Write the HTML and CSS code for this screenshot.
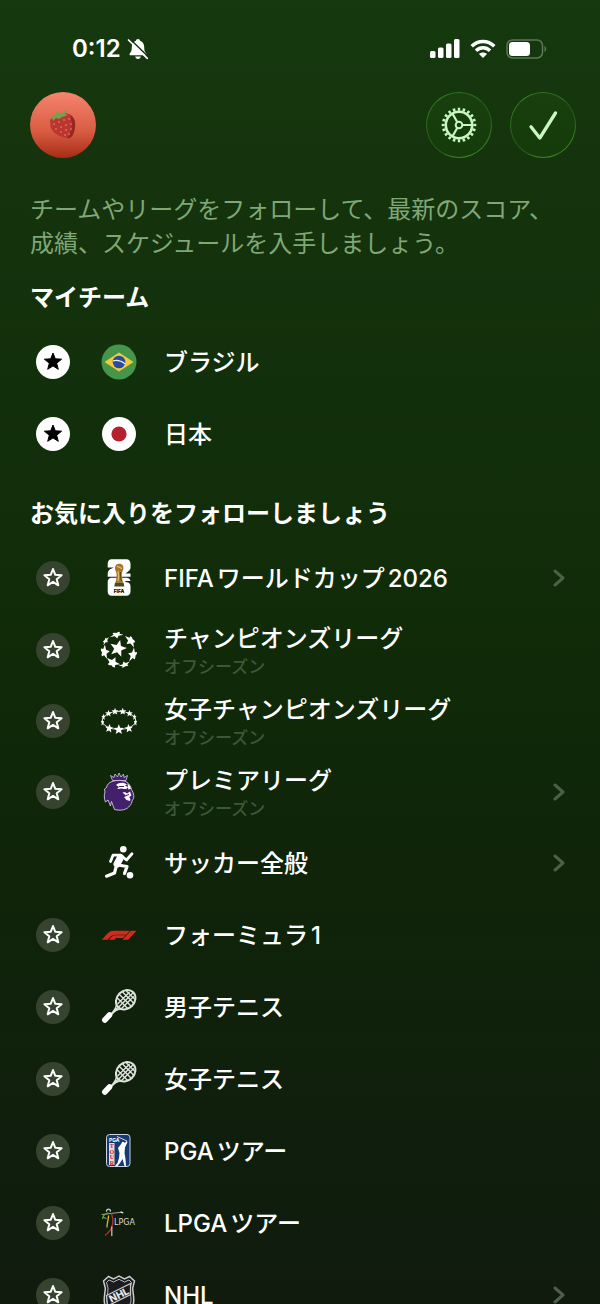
FILE: index.html
```html
<!DOCTYPE html>
<html lang="ja">
<head>
<meta charset="utf-8">
<meta name="viewport" content="width=device-width, initial-scale=1">
<title>マイスポーツ</title>
<link rel="stylesheet" href="styles.css">
</head>
<body>
<svg class="defs" aria-hidden="true">
  <defs>
    <path id="star" d="M0-9 2.300-3.200 8.600-2.800 3.700 1.200 5.300 7.300 0 3.900-5.300 7.300-3.700 1.200-8.600-2.800-2.300-3.200Z"/>
    <g id="racket">
      <path d="M19 20.500 12.500 26.500M17.500 17.500C17 21 15 24 12 27M22.500 21.500C19 22 15.500 24 12.500 27.500" fill="none" stroke="#dfe3de" stroke-width="1.500"/>
      <g transform="rotate(-45 26.700 12.800)">
        <ellipse cx="26.700" cy="12.800" rx="10.600" ry="8.800" fill="none" stroke="#dfe3de" stroke-width="2"/>
        <path d="M18 10h17M17 13h20M18 16h17M22 5v16M26 4v18M30 4v18M33.500 7v12" stroke="#dfe3de" stroke-width="1.400"/>
      </g>
      <path d="M5.800 33 10.500 28" stroke="#fff" stroke-width="5.500" stroke-linecap="round"/>
    </g>
  </defs>
</svg>

<div class="status">
  <div class="status-left">
    <span class="time">0:12</span>
    <svg width="22" height="22" viewBox="0 0 22 22" aria-hidden="true">
      <path d="M11 1c1.200 0 1.900.8 2 1.800 3 1 4.200 3.500 4.200 6.200 0 4 .8 5 2 6.400.6.800.3 1.800-.8 1.800H3.600c-1.100 0-1.400-1-.8-1.800C4 14 4.800 13 4.800 9c0-2.700 1.200-5.200 4.200-6.200C9.100 1.800 9.800 1 11 1ZM8.200 18.500h5.600c-.3 1.500-1.300 2.500-2.800 2.500s-2.500-1-2.800-2.500Z" fill="#fff"/>
      <path d="M3 1 22 19.500" stroke="#14360f" stroke-width="1.600"/>
      <path d="M1.500 2 20.300 20.300" stroke="#fff" stroke-width="1.700" stroke-linecap="round"/>
    </svg>
  </div>
  <div class="status-right">
    <svg width="30" height="20" viewBox="0 0 30 20" aria-hidden="true" fill="#fff">
      <rect x="0" y="12" width="5.500" height="7" rx="1.500"/><rect x="8" y="8.500" width="5.500" height="10.500" rx="1.500"/><rect x="16" y="4.500" width="5.500" height="14.500" rx="1.500"/><rect x="24" y="0" width="5.500" height="19" rx="1.500"/>
    </svg>
    <svg width="26" height="20" viewBox="0 0 26 20" aria-hidden="true" fill="none" stroke="#fff" stroke-width="3.400">
      <path d="M1.700 7.300c6.500-6.500 16.100-6.500 22.600 0M6 11.700c4-4 10-4 14 0"/>
      <path d="M13 19 9 14.900c2.200-2 5.800-2 8 0Z" fill="#fff" stroke="none"/>
    </svg>
    <svg width="41" height="20" viewBox="0 0 41 20" aria-hidden="true">
      <rect x="1" y="1" width="35.500" height="18" rx="5.500" fill="none" stroke="#5c7658" stroke-width="1.500"/>
      <rect x="3" y="3" width="21" height="14" rx="3.500" fill="#fff"/>
      <path d="M38.500 7v6c2.300-1 2.300-5 0-6Z" fill="#5c7658"/>
    </svg>
  </div>
</div>

<header class="topbar">
  <button class="avatar" aria-label="プロフィール">
    <svg width="32" height="34" viewBox="0 0 32 34" aria-hidden="true">
      <path d="M3 12C7 7 18 3 24 7c5 4 5 11 3 17-1 4-4 7-7 6C12 29 5 24 3.500 19Z" fill="#bd3531"/>
      <path d="M23 7c6 3 6 11 4 17-1 4-4 7-7 6 5-5 6-14 3-23Z" fill="#962823"/>
      <path d="M2 12C5 9 8 6 10 6L8 2l5 4 7-4-2 4 3 1-6 2-3 2-3-1-3 3-1-3Z" fill="#71a34c"/>
      <g fill="#efac79"><circle cx="7" cy="16" r=".7"/><circle cx="12" cy="14" r=".7"/><circle cx="17" cy="12" r=".7"/><circle cx="22" cy="11" r=".7"/><circle cx="9" cy="21" r=".7"/><circle cx="14" cy="19" r=".7"/><circle cx="19" cy="17" r=".7"/><circle cx="24" cy="16" r=".7"/><circle cx="14" cy="24" r=".7"/><circle cx="19" cy="22" r=".7"/><circle cx="24" cy="21" r=".7"/><circle cx="18" cy="27" r=".7"/><circle cx="22" cy="26" r=".7"/></g>
    </svg>
  </button>
  <div class="actions">
    <button class="round" aria-label="設定">
      <svg width="40" height="40" viewBox="-20 -20 40 40" aria-hidden="true" fill="none" stroke="#c9f7c1">
        <circle r="13.200" stroke-width="2.600"/>
        <circle r="15.800" stroke-width="3" pathLength="60" stroke-dasharray="1.500 1.500" stroke-dashoffset=".75"/>
        <circle r="3.300" stroke-width="2"/>
        <path d="M3.500 0H13M-1.800-3-6.600-11.500M-1.800 3-6.600 11.500" stroke-width="2.200"/>
      </svg>
    </button>
    <button class="round" aria-label="完了">
      <svg width="40" height="40" viewBox="0 0 40 40" aria-hidden="true" fill="none" stroke="#c9f7c1" stroke-width="3.300" stroke-linecap="round" stroke-linejoin="round"><path d="M8 21.800 16.800 33 32.500 8"/></svg>
    </button>
  </div>
</header>

<main class="content">
  <p class="lead">チームやリーグをフォローして、最新のスコア、成績、スケジュールを入手しましょう。</p>

  <h2>マイチーム</h2>
  <ul class="list">
    <li class="row">
      <button class="star on" aria-label="ブラジルのフォローを解除"><svg width="24" height="24" viewBox="-12 -12 24 24"><use href="#star"/></svg></button>
      <svg class="logo" viewBox="0 0 40 40" aria-hidden="true">
        <circle cx="20" cy="20" r="17.500" fill="#45964a"/><path d="M5.500 20 20 10.500 34.500 20 20 29.500Z" fill="#f4c93e"/><circle cx="20" cy="20" r="6.300" fill="#2b4a9c"/><path d="M14 18.800c4-1 8.500 0 12 3" fill="none" stroke="#e8edf5" stroke-width="1.200"/>
      </svg>
      <div class="name">ブラジル</div>
    </li>
    <li class="row">
      <button class="star on" aria-label="日本のフォローを解除"><svg width="24" height="24" viewBox="-12 -12 24 24"><use href="#star"/></svg></button>
      <svg class="logo" viewBox="0 0 40 40" aria-hidden="true"><circle cx="20" cy="20" r="17" fill="#fff"/><circle cx="20" cy="20" r="7.600" fill="#b4202f"/></svg>
      <div class="name">日本</div>
    </li>
  </ul>

  <h2>お気に入りをフォローしましょう</h2>
  <ul class="list">
    <li class="row">
      <button class="star" aria-label="FIFAワールドカップ2026をフォロー"><svg width="24" height="24" viewBox="-12 -12 24 24"><use href="#star"/></svg></button>
      <svg class="logo" viewBox="0 0 40 40" aria-hidden="true">
        <path d="M12.500 1.200h15c2.500 0 4 2 4 4.500v3.500c0 2-1 3.500-3 4.800l-2 1.500h5v3.300H8.700V16c0-3 1.500-4.500 4-5.500l2-1H8.700V5.700c0-2.500 1.500-4.500 3.800-4.500Z" fill="#fff"/>
        <path d="M12.500 19.800h15c2 0 3.500 1.200 4 3.200h-6l2 1.300c2.800 0 4 1.800 4 4v5.200c0 2.500-1.500 4.200-4 4.200h-15c-2.500 0-3.800-1.700-3.800-4.200V24c0-2.500 1.500-4.200 3.800-4.200Z" fill="#fff"/>
        <path d="M17 7c1.500-1.800 5-1.800 6.500 0 1.500 2 1 4.500 0 6.200-1.200 2.500-.7 6.300.5 11.300h-7.500c1.200-5 1.700-8.500.3-11.300-1-2-1.200-4.200.2-6.200Z" fill="#a8752a"/>
        <path d="M18 8c2 2 4 1 4.500 3M19 13c1 3 1 6 0 10" fill="none" stroke="#e5bd62" stroke-width="1.200"/>
        <path d="M21.500 14c-.5 3 0 6 1 9" fill="none" stroke="#5c3a12"/>
        <path d="M16 24.500h8.500l.8 4h-10Z" fill="#4a4a1c"/>
        <text x="20" y="34.700" class="fifa-word">FIFA</text>
      </svg>
      <div class="name"><span class="before">FIFA</span>ワールドカップ<span class="after">2026</span></div>
      <button class="chevron" aria-label="FIFAワールドカップ2026を開く"><svg width="12" height="20" viewBox="0 0 12 20"><path d="M2 3 10 10 2 17"/></svg></button>
    </li>
    <li class="row double">
      <button class="star" aria-label="チャンピオンズリーグをフォロー"><svg width="24" height="24" viewBox="-12 -12 24 24"><use href="#star"/></svg></button>
      <svg class="logo" viewBox="-20 -20 40 40" aria-hidden="true" fill="#fff">
        <clipPath id="ball"><circle r="18.200"/></clipPath>
        <g clip-path="url(#ball)">
          <use href="#star" transform="translate(-1 -1.500) rotate(14) scale(.98)"/>
          <g transform="rotate(-9) translate(0 -15.500)"><use href="#star" transform="scale(.8 -.42)"/></g>
          <g transform="rotate(52) translate(0 -15)"><use href="#star" transform="scale(.85 -.6)"/></g>
          <g transform="rotate(109) translate(0 -15)"><use href="#star" transform="scale(.85 -.6)"/></g>
          <g transform="rotate(159) translate(0 -15.800)"><use href="#star" transform="scale(.7 -.4)"/></g>
          <g transform="rotate(206) translate(0 -14.300)"><use href="#star" transform="scale(.85 -.7)"/></g>
          <g transform="rotate(262) translate(0 -14.800)"><use href="#star" transform="scale(.85 -.6)"/></g>
          <g transform="rotate(305) translate(0 -16.300)"><use href="#star" transform="scale(.6 -.3)"/></g>
        </g>
      </svg>
      <div class="name">チャンピオンズリーグ<small>オフシーズン</small></div>
    </li>
    <li class="row double">
      <button class="star" aria-label="女子チャンピオンズリーグをフォロー"><svg width="24" height="24" viewBox="-12 -12 24 24"><use href="#star"/></svg></button>
      <svg class="logo" viewBox="0 0 40 40" aria-hidden="true" fill="#fff">
        <ellipse cx="20" cy="19.500" rx="16.800" ry="9" fill="none" stroke="#fff" stroke-width=".8"/>
        <use href="#star" transform="translate(9.500 12.500) scale(.4)"/>
        <use href="#star" transform="translate(16 10.500) scale(.42)"/>
        <use href="#star" transform="translate(23.700 10.500) scale(.42)"/>
        <use href="#star" transform="translate(30.500 12.500) scale(.4)"/>
        <use href="#star" transform="translate(4.500 16) scale(.24 .4)"/>
        <use href="#star" transform="translate(35.500 16) scale(.24 .4)"/>
        <use href="#star" transform="translate(3.500 21.500) scale(.2 .45)"/>
        <use href="#star" transform="translate(36.500 21.500) scale(.2 .45)"/>
        <use href="#star" transform="translate(10.200 27.500) rotate(8) scale(.5)"/>
        <use href="#star" transform="translate(19.800 28.700) scale(.6)"/>
        <use href="#star" transform="translate(29.800 27.500) rotate(-8) scale(.5)"/>
      </svg>
      <div class="name">女子チャンピオンズリーグ<small>オフシーズン</small></div>
    </li>
    <li class="row double">
      <button class="star" aria-label="プレミアリーグをフォロー"><svg width="24" height="24" viewBox="-12 -12 24 24"><use href="#star"/></svg></button>
      <svg class="logo" viewBox="0 0 40 40" aria-hidden="true">
        <path d="M13.500 8.500 11.500 3.500 15 5.500 16 2 18.500 5 20 1 22 5 24.500 2 25 5.500 28.500 3.500 27 8.500Z" fill="#43206b" stroke="#d5c8e2" stroke-width=".8"/>
        <path d="M13 9.500c4-1.500 10-1.500 14 0 3 2 5 5 5.500 8l1.500 3c.8 2 1 4 .5 6l-1.500 2.500c0 1.500-1 3.500-2 4.500-3 4.500-9 5.500-15.500 4-1-3-2-5-3-8l-1 4.500-2.500-6-2.500 2c-1.500-3-1.500-7-.5-10l-.5-3 2-1.500c.5-3 2.500-5 5.500-6Z" fill="#43206b" stroke="#d5c8e2" stroke-width=".9"/>
        <path d="M17 13c3-3 8-3 11-.5l-2 1 3 1.500c-1 2.500-4 2.500-6 1.500l-5 .5 2-2Z" fill="#fff"/>
        <path d="M28.500 11.500c2 1.500 3.200 3.500 3.300 5.500l-2.500.5Z" fill="#fff"/>
        <path d="M23.500 20.500c2-.5 3-.5 4.500 1l3-2 1.500 4-2.500 1.500c1.500 1 1.500 2.500 1 4l-3.500-1-2.500-3 2.500-1Z" fill="#fff"/>
        <path d="M20 14.500h5M27 23.500l3-1" stroke="#43206b"/>
      </svg>
      <div class="name">プレミアリーグ<small>オフシーズン</small></div>
      <button class="chevron" aria-label="プレミアリーグを開く"><svg width="12" height="20" viewBox="0 0 12 20"><path d="M2 3 10 10 2 17"/></svg></button>
    </li>
    <li class="row">
      <span></span>
      <svg class="logo" viewBox="0 0 40 40" aria-hidden="true" fill="none" stroke="#fff" stroke-linecap="round" stroke-linejoin="round">
        <circle cx="24.300" cy="6.300" r="3.300" fill="#fff" stroke="none"/><circle cx="31" cy="32.200" r="3.300" fill="#fff" stroke="none"/>
        <path d="M11.500 18.500 14 12.200 21.500 12.200 27.500 17 33 10.800" stroke-width="2.800"/>
        <path d="M21.500 14.500 18 21" stroke-width="7"/>
        <path d="M19 22 28 23.500 25.500 30.500M17 24 15.500 30 7.500 33.200" stroke-width="3.200"/>
      </svg>
      <div class="name">サッカー全般</div>
      <button class="chevron" aria-label="サッカー全般を開く"><svg width="12" height="20" viewBox="0 0 12 20"><path d="M2 3 10 10 2 17"/></svg></button>
    </li>
    <li class="row">
      <button class="star" aria-label="フォーミュラ1をフォロー"><svg width="24" height="24" viewBox="-12 -12 24 24"><use href="#star"/></svg></button>
      <svg class="logo" viewBox="0 0 40 40" aria-hidden="true" fill="#d32a1e">
        <path d="M2.700 24.800 9 18Q11.500 15.800 14.500 15.800H30.800L27.300 19.800H16Q13.500 19.800 12 21.300L8.700 24.800ZM10 24.800l3-3.300q1.300-1.200 3-1.200h10.700L24.200 23.100H17l-1.500 1.700ZM31.800 15.800h5.700L29.200 24.800H23.500Z"/>
      </svg>
      <div class="name">フォーミュラ<span class="after">1</span></div>
    </li>
    <li class="row">
      <button class="star" aria-label="男子テニスをフォロー"><svg width="24" height="24" viewBox="-12 -12 24 24"><use href="#star"/></svg></button>
      <svg class="logo" viewBox="0 0 40 40" aria-hidden="true"><use href="#racket"/></svg>
      <div class="name">男子テニス</div>
    </li>
    <li class="row">
      <button class="star" aria-label="女子テニスをフォロー"><svg width="24" height="24" viewBox="-12 -12 24 24"><use href="#star"/></svg></button>
      <svg class="logo" viewBox="0 0 40 40" aria-hidden="true"><use href="#racket"/></svg>
      <div class="name">女子テニス</div>
    </li>
    <li class="row">
      <button class="star" aria-label="PGAツアーをフォロー"><svg width="24" height="24" viewBox="-12 -12 24 24"><use href="#star"/></svg></button>
      <svg class="logo" viewBox="0 0 40 40" aria-hidden="true">
        <rect x="7.500" y="3.500" width="23.500" height="32" rx="3" fill="#173a72" stroke="#c9d3e2" stroke-width="1"/>
        <text x="10" y="11" class="pga-word">PGA</text>
        <path d="M10 12h5.500v22H10Z" fill="#f0d5d6"/>
        <g class="tour-word"><text x="12.800" y="17.200">T</text><text x="12.800" y="22.700">O</text><text x="12.800" y="28.200">U</text><text x="12.800" y="33.700">R</text></g>
        <path d="M18 5.500 28 10" stroke="#fff" stroke-width=".8"/>
        <path d="M22.500 12.500a1.600 1.600 0 1 1 1.500 1.500l3.500-4 1 1L26 16.500l-.5 5.500 1 6 .5 7h-1.500l-2-7-2.500 4-2.500 3h-2.500l2.500-3 1.500-5 .5-5-1.500-5Z" fill="#fff"/>
      </svg>
      <div class="name"><span class="before">PGA</span>ツアー</div>
    </li>
    <li class="row">
      <button class="star" aria-label="LPGAツアーをフォロー"><svg width="24" height="24" viewBox="-12 -12 24 24"><use href="#star"/></svg></button>
      <svg class="logo" viewBox="0 0 40 40" aria-hidden="true" fill="none" stroke-linecap="round">
        <path d="M3 11.500 23 9.200" stroke="#aab5aa" stroke-width=".9"/><path d="M22 9l1.800.8" stroke="#e8e8e8" stroke-width="1.300"/>
        <path d="M7.500 8C8 5.500 11 5.500 11.500 8" stroke="#c9d6d2" stroke-width="1.300"/>
        <path d="M3.500 15.500 5 12l4-2M4 14l3 1.500" stroke="#64a33b" stroke-width="1.300"/>
        <path d="M9.500 13c0 4-1.500 6-1.500 11" stroke="#d9b92e" stroke-width="1.300"/>
        <path d="M12.500 11c3 8 1 16-6 21" stroke="#b2312c" stroke-width="1.400"/>
        <path d="M12.800 24v8.500" stroke="#b9bfb9" stroke-width="1.300"/>
        <text x="15" y="22.300" class="lpga-word">LPGA</text>
      </svg>
      <div class="name"><span class="before">LPGA</span>ツアー</div>
    </li>
    <li class="row">
      <button class="star" aria-label="NHLをフォロー"><svg width="24" height="24" viewBox="-12 -12 24 24"><use href="#star"/></svg></button>
      <svg class="logo" viewBox="0 0 40 40" aria-hidden="true">
        <path d="M9.500 1.500 14.500 4 20 1.200 25.500 4 30.500 1.500 35.500 6 33.700 13C34 20 36 25 34 30 30 35 24 34 20 39 16 34 10 35 6 30 4 25 6 20 6.300 13L4.500 6Z" fill="#1b1b1d" stroke="#c7c9cb" stroke-width="1.500"/>
        <path d="M10 5 14.500 7 20 4.300 25.500 7 30 5 32.500 7.500 31 13C31 20 33 24 31.500 28.500 28 32 23 32 20 35 17 32 12 32 8.500 28.500 7 24 9 20 9 13L7.500 7.500Z" fill="none" stroke="#c7c9cb" stroke-width=".9"/>
        <path d="M7.500 20.500 31.500 8.500V19.500L8.500 31Z" fill="#1b1b1d" stroke="#c7c9cb" stroke-width="1.300"/>
        <text x="20" y="23.500" transform="rotate(-27 20 20)" class="nhl-word">NHL</text>
      </svg>
      <div class="name">NHL</div>
      <button class="chevron" aria-label="NHLを開く"><svg width="12" height="20" viewBox="0 0 12 20"><path d="M2 3 10 10 2 17"/></svg></button>
    </li>
  </ul>
</main>
</body>
</html>
```
FILE: styles.css
```css
* {
  box-sizing: border-box;
}

body {
  margin: 0;
  height: 100vh;
  display: flex;
  flex-direction: column;
  overflow: hidden;
  color: #fff;
  font-family: Inter, "Noto Sans CJK JP", sans-serif;
  font-size: 24px;
  background: linear-gradient(#16390f 0%, #15340d 12%, #122f0b 32%, #102b08 48%, #0f230a 70%, #101b0e 100%);
}

button {
  display: grid;
  place-items: center;
  margin: 0;
  padding: 0;
  border: 0;
  background: none;
  color: inherit;
  cursor: pointer;
}

.defs {
  position: absolute;
  width: 0;
  height: 0;
}

.status {
  display: flex;
  justify-content: space-between;
  align-items: center;
  padding: 34px 53px 0 72px;
  line-height: 30px;
}

.status-left,
.status-right {
  display: flex;
  align-items: center;
}

.status-left {
  gap: 6px;
}

.status-right {
  gap: 10px;
}

.time {
  font-weight: 600;
}

.topbar {
  display: flex;
  justify-content: space-between;
  padding: 28px 24px 0 30px;
}

.actions {
  display: flex;
  gap: 18px;
}

.avatar,
.round {
  width: 66px;
  height: 66px;
  border-radius: 50%;
}

.avatar {
  background: linear-gradient(#f58470, #d85c42 60%, #a82c14);
}

.round {
  border: 1px solid transparent;
  background:
    linear-gradient(#183f0d, #163b0b) padding-box,
    linear-gradient(150deg, #37862a, #2c6e1c 30%, #235a14 55%, #44a022) border-box;
}

.content {
  flex: 1;
  min-height: 0;
  padding-top: 35px;
  overflow-y: auto;
  scrollbar-width: none;
}

.lead {
  margin: 0 30px;
  line-height: 34px;
  color: #7fa777;
}

h2 {
  margin: 0 30px;
  padding: 19px 0 10px;
  font-size: 24px;
  line-height: 36px;
  font-weight: 600;
}

.list {
  margin: 0;
  padding: 0;
  list-style: none;
}

.list + h2 {
  padding-top: 26px;
}

.row {
  display: grid;
  grid-template-columns: 66px 66px 1fr 12px;
  align-items: center;
  justify-items: center;
  min-height: 72px;
  padding: 0 35px 0 20px;
}

.double {
  min-height: 71px;
}

.star {
  width: 34px;
  height: 34px;
  border-radius: 50%;
  background: #35432f;
  fill: none;
  stroke: #fff;
  stroke-width: 2;
  stroke-linejoin: round;
}

.star.on {
  background: #fff;
  fill: #000;
  stroke: #000;
  stroke-width: 1;
}

.logo {
  width: 40px;
  height: 40px;
}

.name {
  justify-self: stretch;
  padding: 2px 0 0 12px;
  line-height: 32px;
  font-weight: 500;
}

.name small {
  display: block;
  font-size: 17px;
  line-height: 24px;
  color: #3f5739;
}

.before {
  margin-right: 3px;
}

.after {
  margin-left: 3px;
}

.chevron {
  fill: none;
  stroke: #4c5f47;
  stroke-width: 3;
  stroke-linecap: round;
  stroke-linejoin: round;
}

.fifa-word {
  font: 800 5px Inter, sans-serif;
  text-anchor: middle;
}

.pga-word {
  font: 700 5px Inter, sans-serif;
  fill: #fff;
}

.tour-word {
  font: 800 6px "Liberation Serif", serif;
  text-anchor: middle;
  fill: #c22532;
}

.lpga-word {
  font: 8px "DejaVu Sans", sans-serif;
  fill: #d5dad5;
}

.nhl-word {
  font: 800 10px Inter, sans-serif;
  text-anchor: middle;
  fill: #e6e7e8;
}
```
